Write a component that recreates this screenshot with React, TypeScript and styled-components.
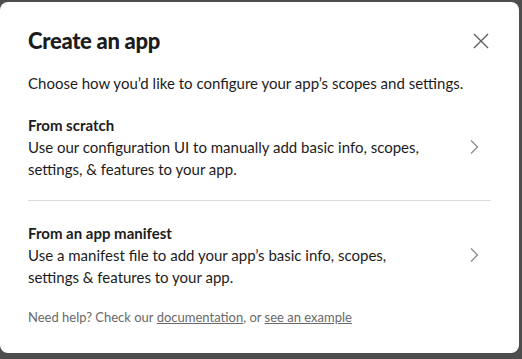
import styled, { createGlobalStyle } from "styled-components"

const GlobalStyle = createGlobalStyle`
	html, body {
		margin: 0;
		padding: 0;
		background: #4d4d4d;
		font-family: Lato, "Noto Sans", sans-serif;
		-webkit-font-smoothing: antialiased;
	}
`

const Backdrop = styled.div`
	width: 522px;
	height: 359px;
	padding: 2px 3px 6px 0;
	box-sizing: border-box;
	display: flex;
`

const Modal = styled.div`
	flex: 1;
	background: #fff;
	border-radius: 8px;
	display: flex;
	flex-direction: column;
	color: #1d1c1d;
`

const Header = styled.div`
	display: flex;
	align-items: center;
	justify-content: space-between;
	padding: 21px 24px 0 28px;
	height: 36px;
`

const Title = styled.h1`
	margin: 0;
	font-size: 22px;
	font-weight: 900;
	letter-spacing: -0.3px;
	line-height: 36px;
`

const CloseButton = styled.button`
	border: none;
	background: none;
	padding: 0;
	width: 28px;
	height: 28px;
	display: flex;
	align-items: center;
	justify-content: center;
	color: #616061;
	cursor: pointer;
`

const Body = styled.div`
	padding: 0 28px;
	display: flex;
	flex-direction: column;
`

const Intro = styled.p`
	margin: 13px 0 0;
	font-size: 15px;
	line-height: 22px;
`

const Option = styled.div<{ $divider?: boolean }>`
	display: flex;
	align-items: center;
	justify-content: space-between;
	padding: 20px 0 20px;
	border-bottom: ${(p) => (p.$divider ? "1px solid #dddddd" : "none")};
	cursor: pointer;

	& + & {
		padding-top: 21px;
	}
`

const OptionText = styled.div`
	max-width: 405px;
	font-size: 15px;
	line-height: 22px;
`

const OptionTitle = styled.div`
	font-weight: 700;
`

const Chevron = styled.span`
	display: flex;
	color: #8c8c8c;
	margin-right: 12px;
`

const Footer = styled.p`
	margin: 0;
	padding: 0 28px;
	font-size: 13px;
	line-height: 18px;
	color: #696969;

	a {
		color: #696969;
		text-decoration: underline;
	}
`

const options = [
	{
		title: "From scratch",
		text: "Use our configuration UI to manually add basic info, scopes, settings, & features to your app."
	},
	{
		title: "From an app manifest",
		text: "Use a manifest file to add your app\u2019s basic info, scopes, settings & features to your app."
	}
]

function ChevronIcon() {
	return (
		<svg width='10' height='16' viewBox='0 0 10 16' fill='none'>
			<path d='M2 1.5 L8.5 8 L2 14.5' stroke='currentColor' strokeWidth='1.3' />
		</svg>
	)
}

export default function App() {
	return (
		<>
			<GlobalStyle />
			<Backdrop>
				<Modal>
					<Header>
						<Title>Create an app</Title>
						<CloseButton aria-label='Close'>
							<svg width='16' height='16' viewBox='0 0 16 16'>
								<path d='M1 1 L15 15 M15 1 L1 15' stroke='currentColor' strokeWidth='1.4' />
							</svg>
						</CloseButton>
					</Header>
					<Body>
						<Intro>Choose how you’d like to configure your app’s scopes and settings.</Intro>
						{options.map((o, i) => (
							<Option key={o.title} $divider={i === 0}>
								<OptionText>
									<OptionTitle>{o.title}</OptionTitle>
									{o.text}
								</OptionText>
								<Chevron>
									<ChevronIcon />
								</Chevron>
							</Option>
						))}
					</Body>
					<Footer>
						Need help? Check our <a href='#'>documentation</a>, or <a href='#'>see an example</a>
					</Footer>
				</Modal>
			</Backdrop>
		</>
	)
}
